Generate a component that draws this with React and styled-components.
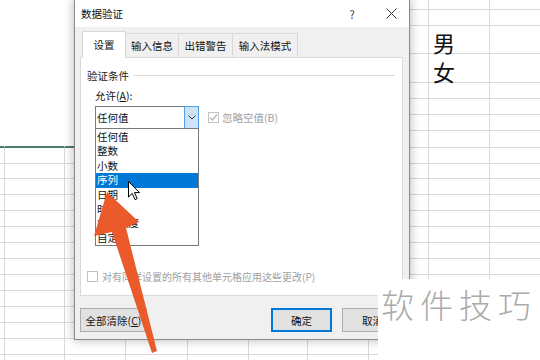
import React from 'react';
import styled, { createGlobalStyle } from 'styled-components';

const Global = createGlobalStyle`
  html, body { margin: 0; padding: 0; background: #fff; }
  body { font-family: "Noto Sans CJK SC", "Noto Sans", sans-serif; }
`;

const Stage = styled.div`
  position: relative;
  width: 540px;
  height: 360px;
  overflow: hidden;
  background: #fff;
`;

const Sheet = styled.div`
  display: flex;
  flex-direction: column;
`;

const SheetRow = styled.div`
  display: flex;
  flex: none;
  height: ${p => p.$h}px;
`;

const Cell = styled.div`
  box-sizing: border-box;
  flex: none;
  width: ${p => p.$w}px;
  height: 100%;
  border-right: 1px solid ${p => (p.$blank ? 'transparent' : '#d9d9d9')};
  border-bottom: ${p =>
    p.$sel ? '2px solid #4b7a68' : p.$blank ? '1px solid transparent' : '1px solid #d9d9d9'};
  display: flex;
  align-items: flex-end;
  padding: 0 0 0 4px;
  font-size: 22px;
  line-height: 1;
  color: #111;
`;

const Dialog = styled.div`
  position: absolute;
  z-index: 1;
  left: 74px;
  top: -2px;
  width: 336px;
  height: 342px;
  box-sizing: border-box;
  border: 1px solid #8a8a8a;
  background: #f0f0f0;
  box-shadow: 0 0 10px rgba(0, 0, 0, 0.3);
  display: flex;
  flex-direction: column;
  font-size: 10.5px;
  color: #000;
`;

const TitleBar = styled.div`
  flex: none;
  height: 28px;
  background: #fff;
  display: flex;
  align-items: center;
  padding: 1px 0 0 6px;
  box-sizing: border-box;
`;

const Title = styled.div`
  flex: 1;
  font-size: 10.5px;
  color: #111;
`;

const TitleButton = styled.div`
  width: 36px;
  height: 100%;
  margin-left: 3px;
  display: flex;
  align-items: center;
  justify-content: center;
  font-size: 11px;
  color: #333;
`;

const Body = styled.div`
  flex: 1;
  display: flex;
  flex-direction: column;
  padding: 4px 6px 7px 5px;
`;

const TabStrip = styled.div`
  display: flex;
  align-items: flex-end;
  height: 26px;
  padding-left: 2px;
  position: relative;
  z-index: 1;
`;

const Tab = styled.div`
  box-sizing: border-box;
  width: ${p => p.$w}px;
  height: ${p => (p.$active ? 27 : 24)}px;
  margin-bottom: ${p => (p.$active ? -1 : 0)}px;
  margin-right: -1px;
  background: ${p => (p.$active ? '#fff' : '#f0f0f0')};
  border: 1px solid #d9d9d9;
  border-bottom: none;
  display: flex;
  align-items: center;
  justify-content: center;
  padding-bottom: ${p => (p.$active ? 2 : 0)}px;
  color: #111;
`;

const Panel = styled.div`
  height: 239px;
  box-sizing: border-box;
  border: 1px solid #d9d9d9;
  background: #fff;
  display: flex;
  flex-direction: column;
  padding: 0 7px 11px 6px;
`;

const GroupHeader = styled.div`
  margin-top: 9px;
  height: 16px;
  display: flex;
  align-items: center;
  color: #222;
`;

const GroupLine = styled.div`
  flex: 1;
  height: 1px;
  margin-left: 4px;
  background: #dcdcdc;
`;

const FieldLabel = styled.div`
  margin: 6px 0 0 8px;
  height: 14px;
  line-height: 14px;
  color: #111;
`;

const ComboRow = styled.div`
  margin: 3px 0 0 8px;
  display: flex;
  align-items: flex-start;
`;

const Combo = styled.div`
  position: relative;
  box-sizing: border-box;
  width: 104px;
  height: 23px;
  border: 1px solid #7a7a7a;
  display: flex;
  align-items: stretch;
`;

const ComboText = styled.div`
  flex: 1;
  display: flex;
  align-items: center;
  padding-left: 1px;
  color: #111;
`;

const ComboButton = styled.div`
  box-sizing: border-box;
  width: 15px;
  margin: -1px -1px -1px 0;
  border: 1px solid #569de5;
  background: #cce4f7;
  display: flex;
  align-items: center;
  justify-content: center;
`;

const DropList = styled.div`
  position: absolute;
  left: -1px;
  top: 21px;
  box-sizing: border-box;
  width: 104px;
  border: 1px solid #7a7a7a;
  background: #fff;
  padding-top: 1px;
  z-index: 2;
`;

const ListItem = styled.div`
  height: 14.4px;
  line-height: 14.4px;
  padding-left: 1px;
  background: ${p => (p.$hl ? '#0078d7' : 'transparent')};
  color: ${p => (p.$hl ? '#fff' : '#111')};
`;

const CheckWrap = styled.label`
  display: flex;
  align-items: center;
  margin: ${p => p.$m || '0'};
  color: ${p => (p.$muted ? '#a0a0a0' : '#111')};
  font-size: ${p => p.$fs || 10.5}px;
`;

const Box = styled.span`
  box-sizing: border-box;
  width: 11px;
  height: 11px;
  border: 1px solid #c2c2c2;
  background: #fff;
  display: flex;
  align-items: center;
  justify-content: center;
  margin-right: ${p => p.$gap || 3}px;
`;

const CheckLine = styled.div`
  margin-top: auto;
`;

const Footer = styled.div`
  margin-top: 12px;
  display: flex;
  height: 24px;
`;

const Spacer = styled.div`
  flex: 1;
`;

const Button = styled.div`
  box-sizing: border-box;
  width: ${p => p.$w}px;
  height: 24px;
  margin-left: ${p => p.$ml || 0}px;
  border: 1px solid ${p => (p.$primary ? '#0078d7' : '#adadad')};
  box-shadow: ${p => (p.$primary ? 'inset 0 0 0 1px #0078d7' : 'none')};
  background: #e1e1e1;
  display: flex;
  align-items: center;
  justify-content: center;
  color: #111;
`;

const Overlay = styled.svg`
  position: absolute;
  z-index: 5;
  left: 0;
  top: 0;
  pointer-events: none;
`;

const Cursor = styled.svg`
  position: absolute;
  z-index: 4;
  left: 128px;
  top: 181px;
`;

const Watermark = styled.div`
  position: absolute;
  z-index: 6;
  left: 378px;
  top: 279px;
  right: 0;
  bottom: 0;
  background: #fff;
  box-sizing: border-box;
  padding: 9px 0 0 3px;
  font-size: 33px;
  line-height: 33px;
  letter-spacing: 6px;
  font-weight: 300;
  color: #ababab;
  white-space: nowrap;
`;

const colWidths = [5, 60, 61, 62, 61, 59, 61, 60, 61, 61];
const rowHeights = [10, 16, 28, 29, 16, 16, 16, 17, 16, 15, 16, 16, 16, 16, 16, 16, 16, 16, 16, 16, 16, 16];
const cellText = { '2-8': '男', '3-8': '女' };

const items = ['任何值', '整数', '小数', '序列', '日期', '时间', '文本长度', '自定义'];

function Chevron() {
  return (
    <svg width="8" height="5" viewBox="0 0 8 5">
      <polyline points="0.5,0.5 4,4 7.5,0.5" fill="none" stroke="#333" strokeWidth="1" />
    </svg>
  );
}

export default function App() {
  return (
    <Stage>
      <Global />
      <Sheet>
        {rowHeights.map((h, r) => (
          <SheetRow key={r} $h={h}>
            {colWidths.map((w, c) => {
              const blank = r <= 7 && c <= 2;
              return (
                <Cell key={c} $w={w} $blank={blank} $sel={r === 7 && c <= 2}>
                  {cellText[`${r}-${c}`] || ''}
                </Cell>
              );
            })}
          </SheetRow>
        ))}
      </Sheet>

      <Dialog>
        <TitleBar>
          <Title>数据验证</Title>
          <TitleButton>?</TitleButton>
          <TitleButton>
            <svg width="11" height="11" viewBox="0 0 11 11">
              <path d="M0.5 0.5 L10.5 10.5 M10.5 0.5 L0.5 10.5" stroke="#333" strokeWidth="1" />
            </svg>
          </TitleButton>
        </TitleBar>
        <Body>
          <TabStrip>
            <Tab $w={44} $active>设置</Tab>
            <Tab $w={54}>输入信息</Tab>
            <Tab $w={55}>出错警告</Tab>
            <Tab $w={66}>输入法模式</Tab>
          </TabStrip>
          <Panel>
            <GroupHeader>
              验证条件
              <GroupLine />
            </GroupHeader>
            <FieldLabel>
              允许(<u>A</u>):
            </FieldLabel>
            <ComboRow>
              <Combo>
                <ComboText>任何值</ComboText>
                <ComboButton>
                  <Chevron />
                </ComboButton>
                <DropList>
                  {items.map(t => (
                    <ListItem key={t} $hl={t === '序列'}>
                      {t}
                    </ListItem>
                  ))}
                </DropList>
              </Combo>
              <CheckWrap $muted $m="4px 0 0 9px">
                <Box>
                  <svg width="9" height="9" viewBox="0 0 9 9">
                    <polyline points="1,4.5 3.5,7 8,1.5" fill="none" stroke="#b0b0b0" strokeWidth="1.2" />
                  </svg>
                </Box>
                忽略空值(B)
              </CheckWrap>
            </ComboRow>
            <CheckLine>
              <CheckWrap $muted $fs={10}>
                <Box $gap={4} />
                对有同样设置的所有其他单元格应用这些更改(P)
              </CheckWrap>
            </CheckLine>
          </Panel>
          <Footer>
            <Button $w={67}>
              全部清除(<u>C</u>)
            </Button>
            <Spacer />
            <Button $w={61} $primary>
              确定
            </Button>
            <Button $w={61} $ml={10}>
              取消
            </Button>
          </Footer>
        </Body>
      </Dialog>

      <Cursor width="13" height="20" viewBox="0 0 13 20">
        <path d="M0.5 0.5 L0.5 16 L4.2 12.4 L7 18.6 L9.2 17.6 L6.5 11.6 L11.5 11.6 Z" fill="#fff" stroke="#000" strokeWidth="1" />
      </Cursor>

      <Overlay width="540" height="360" viewBox="0 0 540 360">
        <polygon
          points="107,192 139,222 126,228 157,351 152,353 112,232 94,236"
          fill="#ea5a2b"
        />
      </Overlay>

      <Watermark>软件技巧</Watermark>
    </Stage>
  );
}
